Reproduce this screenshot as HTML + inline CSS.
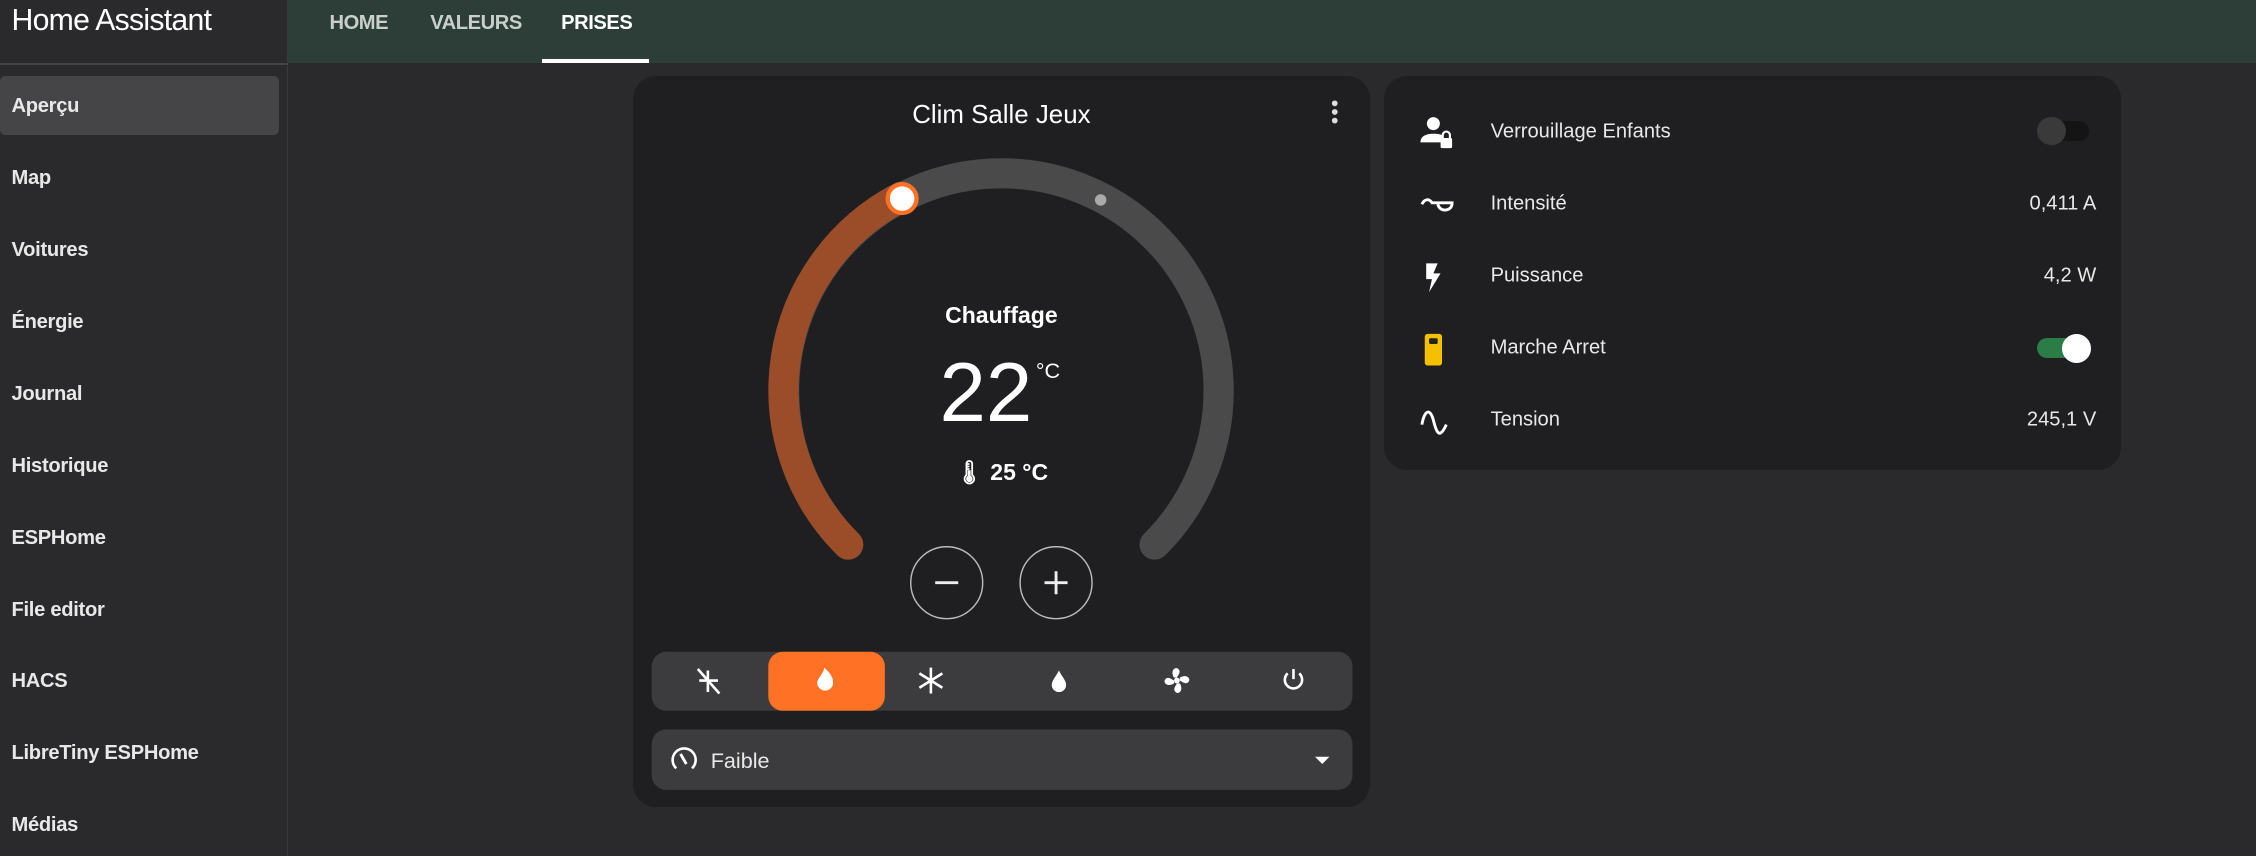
<!DOCTYPE html>
<html><head><meta charset="utf-8"><style>
*{box-sizing:border-box;margin:0;padding:0}
html,body{width:2256px;height:856px;overflow:hidden;background:#2a2a2c}
#z{zoom:1.43878;width:1568px;height:595px;position:relative;font-family:"Liberation Sans",sans-serif;color:#e8e8e8}
.sb{position:absolute;left:0;top:0;width:200px;height:595px;background:#2a2a2c;border-right:1px solid #3a3a3c}
.sb h1{position:absolute;left:8px;top:3px;font-size:21px;font-weight:400;color:#fff;letter-spacing:-.5px}
.sb .ln{position:absolute;left:0;top:44px;width:200px;height:1px;background:#444}
.mi{position:absolute;left:8px;font-size:14px;font-weight:bold;color:#e8e8e8;letter-spacing:-.2px}
.hl{position:absolute;left:0;top:53px;width:194px;height:41px;background:#454547;border-radius:4px}
.tb{position:absolute;left:200px;top:0;width:1368px;height:44px;background:#2d3e38}
.tab{position:absolute;top:8px;font-size:14px;font-weight:bold;color:#c9d0cc;letter-spacing:-.3px}
.card{position:absolute;background:#1f1f21;border-radius:16px}
.row{position:absolute;left:0;width:512px;height:50px;font-size:14px}
.row .t{position:absolute;left:74px;top:50%;transform:translateY(-50%)}
.row .v{position:absolute;right:17px;top:50%;transform:translateY(-50%)}
.row svg{position:absolute;left:24px;top:13px}
</style></head><body><div id="z">
<div class="sb"><h1>Home Assistant</h1><div class="ln"></div><div class="hl"></div>
<div class="mi" style="top:66px">Aperçu</div>
<div class="mi" style="top:116px">Map</div>
<div class="mi" style="top:166px">Voitures</div>
<div class="mi" style="top:216px">Énergie</div>
<div class="mi" style="top:266px">Journal</div>
<div class="mi" style="top:316px">Historique</div>
<div class="mi" style="top:366px">ESPHome</div>
<div class="mi" style="top:416px">File editor</div>
<div class="mi" style="top:466px">HACS</div>
<div class="mi" style="top:516px">LibreTiny ESPHome</div>
<div class="mi" style="top:566px">Médias</div>
</div>
<div class="tb">
<div class="tab" style="left:29px">HOME</div>
<div class="tab" style="left:99px">VALEURS</div>
<div class="tab" style="left:190px;color:#fff">PRISES</div>
<div style="position:absolute;left:177px;top:41px;width:74px;height:3px;background:#fff"></div>
</div>
<div class="card" style="left:440px;top:53px;width:512px;height:508px">
<div style="position:absolute;left:0;width:512px;top:17px;text-align:center;font-size:18px;color:#fff">Clim Salle Jeux</div>
<svg style="position:absolute;left:484px;top:16px" width="8" height="20"><circle cx="4" cy="3" r="2" fill="#ddd"/><circle cx="4" cy="9" r="2" fill="#ddd"/><circle cx="4" cy="15" r="2" fill="#ddd"/></svg>
</div>
<svg style="position:absolute;left:0;top:0" width="1568" height="595">
<path d="M589.5 378.5 A151 151 0 1 1 802.5 378.5" fill="none" stroke="#4a4a4a" stroke-width="21" stroke-linecap="round"/>
<path d="M589.5 378.5 A151 151 0 0 1 626 137" fill="none" stroke="#9b4d2a" stroke-width="21" stroke-linecap="round"/>
<circle cx="765" cy="139" r="4" fill="#aaa"/>
<circle cx="627" cy="138" r="10" fill="#fff" stroke="#ff7124" stroke-width="3"/>
<circle cx="658" cy="405" r="25" fill="none" stroke="#bbb" stroke-width="1"/>
<path d="M650 405h16" stroke="#eee" stroke-width="2"/>
<circle cx="734" cy="405" r="25" fill="none" stroke="#bbb" stroke-width="1"/>
<path d="M726 405h16M734 397v16" stroke="#eee" stroke-width="2"/>
<rect x="453" y="453" width="487" height="41" rx="10" fill="#3c3c3e"/>
<rect x="534" y="453" width="81" height="41" rx="10" fill="#ff7124"/>
<g fill="#fff">
<path d="M568 475c0-4 4-6 5-11 3 3 6 6 6 10a5 5 0 0 1-11 1z"/>
<circle cx="818" cy="473" r="2"/><path d="M816 471c-3-5 1-8 3-6s0 4-1 6zM820 471c5-3 8 1 6 3s-4 0-6-1zM820 475c3 5-1 8-3 6s0-4 1-6zM816 475c-5 3-8-1-6-3s4 0 6 1z"/>
<path d="M736 466c2 4 5 7 5 10a5 5 0 0 1-10 0c0-3 3-6 5-10z"/>
</g>
<g stroke="#fff" stroke-width="1.8" fill="none">
<path d="M655 464v18M647 468l16 10M663 468l-16 10" transform="translate(-8,0)"/>
<path d="M485 465l15 17M486 473h13M492 466v15"/>
<path d="M895 468a6 6 0 1 0 8 0M899 465v7"/>
</g>
<rect x="453" y="507" width="487" height="42" rx="10" fill="#3c3c3e"/>
<path d="M470 534a8 8 0 1 1 11 0" fill="none" stroke="#fff" stroke-width="1.8"/><path d="M473 524l4 7" stroke="#fff" stroke-width="2"/>
<path d="M914 526h10l-5 5z" fill="#fff"/>
</svg>
<div style="position:absolute;left:440px;width:512px;top:210px;text-align:center;font-size:16px;font-weight:bold;color:#fff">Chauffage</div>
<div style="position:absolute;left:653px;top:239px;font-size:58px;color:#fff">22</div>
<div style="position:absolute;left:720px;top:249px;font-size:15px;color:#fff">°C</div>
<div style="position:absolute;left:440px;width:512px;top:319px;text-align:center;font-size:16px;font-weight:bold;color:#fff">🌡 25 °C</div>
<div style="position:absolute;left:494px;top:520px;font-size:15px;color:#e8e8e8">Faible</div>
<div class="card" style="left:962px;top:53px;width:512px;height:274px">
<div class="row" style="top:14px"><svg width="26" height="26"><circle cx="10" cy="6" r="4.5" fill="#fff"/><path d="M1 19c0-5 5-6 9-6s5 .5 6 1v5z" fill="#fff"/><rect x="15" y="16" width="8" height="7" rx="1" fill="#fff"/><path d="M16.5 16v-2a2.5 2.5 0 0 1 5 0v2" stroke="#fff" stroke-width="1.5" fill="none"/></svg><span class="t">Verrouillage Enfants</span>
<div style="position:absolute;right:22px;top:17px;width:36px;height:14px;border-radius:7px;background:#141414"></div><div style="position:absolute;right:38px;top:14px;width:20px;height:20px;border-radius:10px;background:#3a3a3a"></div></div>
<div class="row" style="top:64px"><svg width="26" height="26"><path d="M2 12c2-4 5-4 7-1h14c0 4-3 5-5 5s-4-1-5-4" fill="none" stroke="#fff" stroke-width="2"/></svg><span class="t">Intensité</span><span class="v">0,411 A</span></div>
<div class="row" style="top:114px"><svg width="26" height="26"><path d="M5 3h8l-3 7h5l-8 13 2-9H5z" fill="#fff"/></svg><span class="t">Puissance</span><span class="v">4,2 W</span></div>
<div class="row" style="top:164px"><svg width="26" height="26"><rect x="4" y="2" width="12" height="22" rx="2" fill="#f5c000"/><rect x="7" y="5" width="6" height="4" rx="1" fill="#222"/></svg><span class="t">Marche Arret</span>
<div style="position:absolute;right:22px;top:18px;width:36px;height:14px;border-radius:7px;background:#2a7d46"></div><div style="position:absolute;right:21px;top:15px;width:20px;height:20px;border-radius:10px;background:#fff"></div></div>
<div class="row" style="top:214px"><svg width="26" height="26"><path d="M2 15c2-11 6-11 8-3s4 14 9 3" fill="none" stroke="#fff" stroke-width="2"/></svg><span class="t">Tension</span><span class="v">245,1 V</span></div>
</div>
</div></body></html>
